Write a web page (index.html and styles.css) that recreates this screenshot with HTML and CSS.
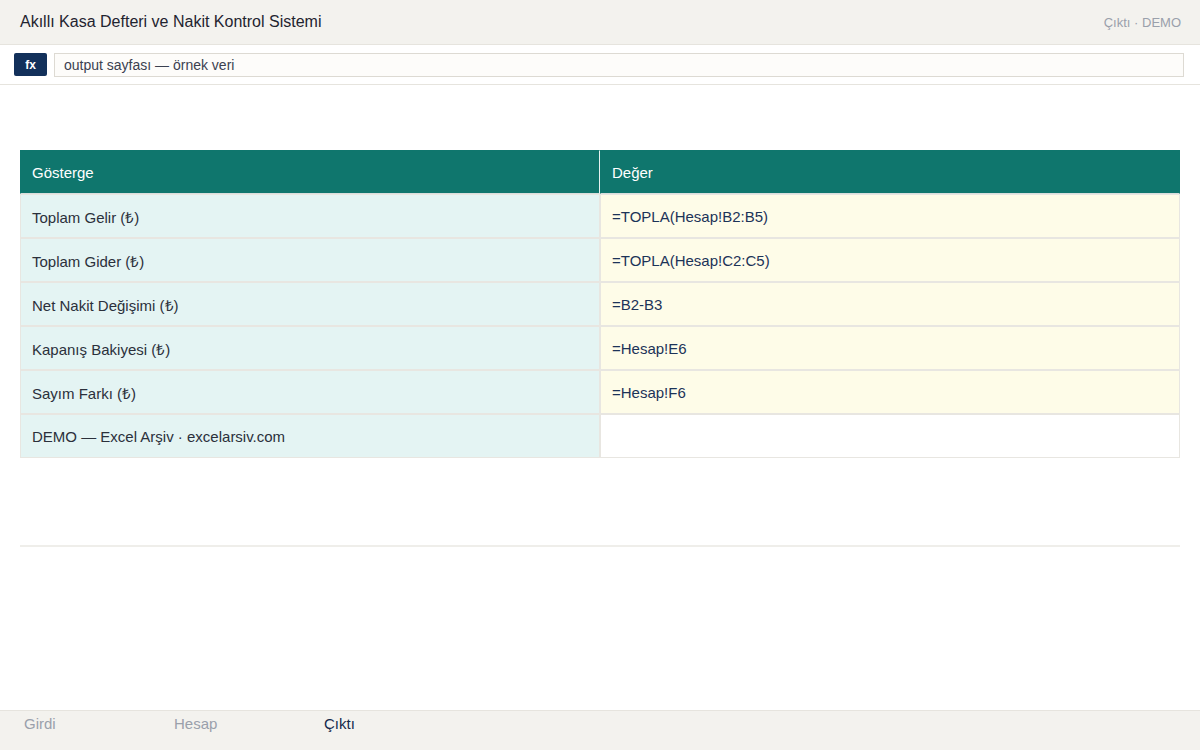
FILE: index.html
```html
<!DOCTYPE html>
<html lang="tr">
<head>
    <meta charset="UTF-8">
    <meta name="viewport" content="width=device-width, initial-scale=1.0">
    <title>Akıllı Kasa Defteri ve Nakit Kontrol Sistemi</title>
    <link rel="stylesheet" href="styles.css">
</head>
<body>
    <div class="app">
        <!-- Top bar -->
        <header class="topbar">
            <div class="title">Akıllı Kasa Defteri ve Nakit Kontrol Sistemi</div>
            <div class="meta">Çıktı · DEMO</div>
        </header>

        <!-- Formula bar -->
        <div class="formula-bar">
            <span class="fx">fx</span>
            <div class="formula-input">output sayfası — örnek veri</div>
        </div>

        <!-- Sheet -->
        <main class="sheet">
            <table class="grid">
                <thead>
                    <tr>
                        <th>Gösterge</th>
                        <th>Değer</th>
                    </tr>
                </thead>
                <tbody>
                    <tr>
                        <td class="label">Toplam Gelir (₺)</td>
                        <td class="formula">=TOPLA(Hesap!B2:B5)</td>
                    </tr>
                    <tr>
                        <td class="label">Toplam Gider (₺)</td>
                        <td class="formula">=TOPLA(Hesap!C2:C5)</td>
                    </tr>
                    <tr>
                        <td class="label">Net Nakit Değişimi (₺)</td>
                        <td class="formula">=B2-B3</td>
                    </tr>
                    <tr>
                        <td class="label">Kapanış Bakiyesi (₺)</td>
                        <td class="formula">=Hesap!E6</td>
                    </tr>
                    <tr>
                        <td class="label">Sayım Farkı (₺)</td>
                        <td class="formula">=Hesap!F6</td>
                    </tr>
                    <tr>
                        <td class="label">DEMO — Excel Arşiv · excelarsiv.com</td>
                        <td class="empty"></td>
                    </tr>
                </tbody>
            </table>

            <div class="divider"></div>
        </main>

        <!-- Sheet tabs -->
        <nav class="tabs">
            <span class="tab">Girdi</span>
            <span class="tab">Hesap</span>
            <span class="tab active">Çıktı</span>
        </nav>
    </div>
</body>
</html>
```

FILE: styles.css
```css
* {
    box-sizing: border-box;
}

html, body {
    height: 100%;
}

body {
    margin: 0;
    font-family: "Liberation Sans", Arial, Helvetica, sans-serif;
    background-color: #ffffff;
    color: #2b303b;
}

.app {
    height: 100vh;
    display: flex;
    flex-direction: column;
}

.topbar {
    height: 45px;
    background-color: #f3f2ee;
    border-bottom: 1px solid #e6e4de;
    display: flex;
    align-items: center;
    justify-content: space-between;
    padding: 0 19px 0 20px;
}

.title {
    font-size: 16px;
    color: #1f2430;
}

.meta {
    font-size: 13px;
    color: #9aa0ab;
}

/* Formula bar */
.formula-bar {
    height: 40px;
    border-bottom: 1px solid #e6e4de;
    display: flex;
    align-items: center;
    gap: 7px;
    padding: 0 16px 0 14px;
}

.fx {
    width: 33px;
    height: 23px;
    border-radius: 2px;
    background-color: #12305a;
    color: #ffffff;
    font-size: 12px;
    font-weight: bold;
    display: flex;
    align-items: center;
    justify-content: center;
}

.formula-input {
    flex: 1;
    height: 24px;
    background-color: #fdfcfa;
    border: 1px solid #dddad3;
    font-size: 14px;
    color: #3b4150;
    padding: 0 9px;
    display: flex;
    align-items: center;
}

/* Sheet */
.sheet {
    flex: 1;
    padding: 65px 20px 0;
}

.grid {
    width: 100%;
    border-collapse: separate;
    border-spacing: 0;
    table-layout: fixed;
    font-size: 15px;
}

.grid th,
.grid td {
    height: 44px;
    padding: 1px 11px 0;
    text-align: left;
    border: 1px solid #e8e6e1;
}

.grid th {
    background-color: #0f766d;
    color: #ffffff;
    font-weight: normal;
    border-color: #d9dedc;
    border-top-color: #0f766d;
    border-left-color: #0f766d;
    border-right-color: #e6f2f0;
}

.grid th:last-child {
    border-right-color: #0f766d;
}

.label {
    background-color: #e4f4f3;
    color: #2b303b;
}

.formula {
    background-color: #fefce8;
    color: #1c3358;
}

.empty {
    background-color: #ffffff;
}

.divider {
    height: 2px;
    background-color: #efeeea;
    margin-top: 87px;
}

/* Tabs */
.tabs {
    height: 40px;
    background-color: #f3f2ee;
    border-top: 1px solid #e6e4de;
    display: flex;
    padding: 4px 0 0 24px;
}

.tab {
    width: 150px;
    font-size: 15px;
    color: #9aa0ab;
}

.tab.active {
    color: #13294b;
}
```
